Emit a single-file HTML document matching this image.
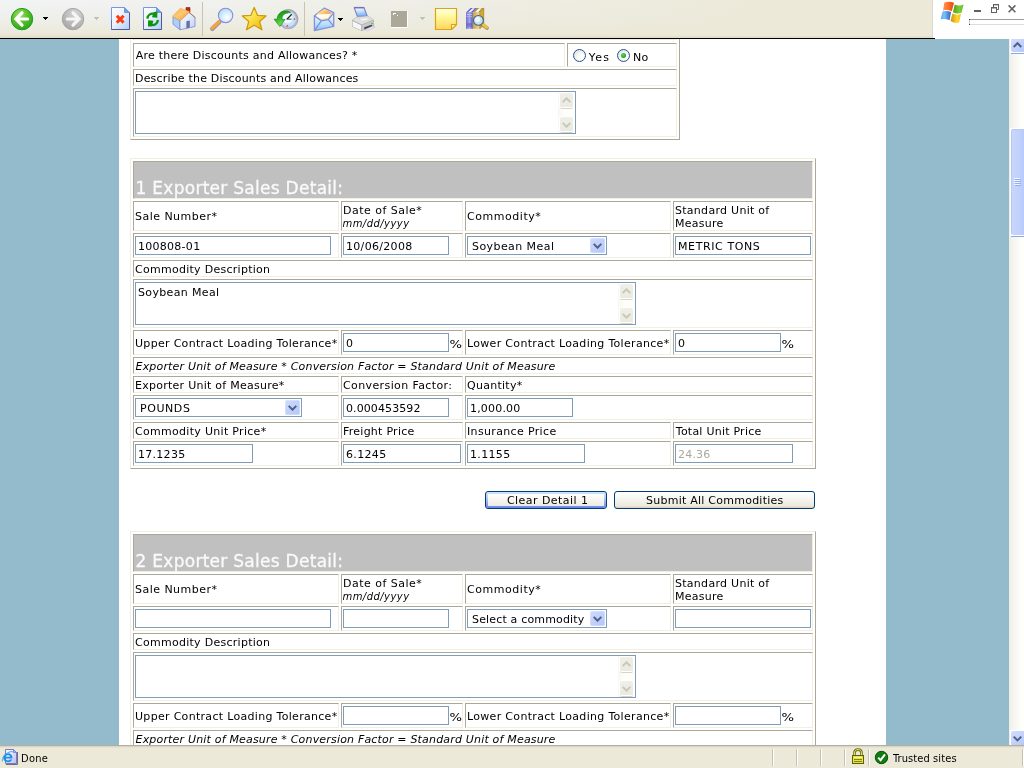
<!DOCTYPE html>
<html><head><meta charset="utf-8"><title>Exporter Sales Detail</title>
<style>
html,body{margin:0;padding:0;}
body{width:1024px;height:768px;overflow:hidden;position:relative;background:#94bbcc;font-family:"DejaVu Sans","Liberation Sans",sans-serif;font-size:11px;color:#000;}
#page{position:absolute;left:119px;top:39px;width:767px;height:706px;background:#fff;}
#view{position:absolute;left:0;top:39px;width:1009px;height:706px;overflow:hidden;}
#view .in0{position:absolute;left:0;top:-39px;width:1009px;height:768px;will-change:transform;}
.t{position:absolute;white-space:nowrap;line-height:13px;height:13px;margin-top:1px;}
.c{position:absolute;border:1px solid;border-color:#aca899 #f1efe2 #f1efe2 #aca899;}
.tb{position:absolute;border:1px solid;border-color:#f1efe2 #aca899 #aca899 #f1efe2;}
.in{position:absolute;border:1px solid #7f9db9;background:#fff;}
.sb{position:absolute;width:15px;height:15px;border-radius:2px;background:linear-gradient(135deg,#d0dbfd 0%,#c1d0fb 50%,#b3c6f8 100%);box-shadow:inset 0 0 0 1px rgba(255,255,255,.25);}
.sb .chv{position:absolute;left:3px;top:5px;}
.tsb{position:absolute;width:17px;background:linear-gradient(90deg,#f8f7f2,#fefefb 40%);}
.tbtn{position:absolute;left:2px;width:13px;height:14px;border-radius:2px;background:linear-gradient(180deg,#f0efe8,#ebeadf);box-shadow:0 0 0 1px #fff, 0 2px 0 0 #d6d4c6;}
.tbtn .chv{position:absolute;left:2px;top:4px;}
.rd{position:absolute;width:11px;height:11px;border:1px solid #21528c;border-radius:50%;background:radial-gradient(circle at 70% 70%,#fff 20%,#dcdcd4 100%);}
.rd i{position:absolute;left:3px;top:3px;width:5px;height:5px;border-radius:50%;background:radial-gradient(circle at 40% 35%,#5fd35f,#21a121 70%);}
.btn{position:absolute;border:1px solid #003c74;border-radius:3px;background:linear-gradient(180deg,#fff 0%,#f4f3ee 50%,#ece9dd 85%,#d6d0c5 100%);}
.btn.def{padding:2px;background:linear-gradient(180deg,#fff 0%,#f6f5f0 50%,#ecebe3 100%) content-box,linear-gradient(180deg,#cee7ff 0%,#b6cef8 35%,#8aa2f0 75%,#6982ee 100%) padding-box;}
#toolbar{position:absolute;left:0;top:0;width:933px;height:38px;background:linear-gradient(180deg,#eff0ee 0%,#eeeee9 40%,#ece9d8 100%);}
#tbline{position:absolute;left:0;top:38px;width:935px;height:1px;background:#000;}
#topright{position:absolute;left:933px;top:0;width:91px;height:39px;background:#fff;}
#status{position:absolute;left:0;top:745px;width:1024px;height:23px;background:#ece9d8;}
#status:before{content:"";position:absolute;left:0;top:0;width:1024px;height:1px;background:#b2af9e;box-shadow:0 1px 0 #d8d5c4,0 2px 0 #e6e3d2;}
#sttext{position:absolute;left:0;top:745px;width:1024px;height:23px;will-change:transform;font-family:"DejaVu Sans Condensed","Liberation Sans",sans-serif;}
#vsb{position:absolute;left:1009px;top:39px;width:15px;height:706px;background:linear-gradient(90deg,#f0efe8 0,#f6f5f0 3px,#fefefb 12px);}
.sep{position:absolute;top:749px;width:1px;height:17px;background:#c5c2b2;border-right:1px solid #fff;}
</style></head>
<body>
<div id="page"></div>
<div id="view"><div class="in0">
<div class="tb" style="left:130px;top:20px;width:548px;height:118px;"></div>
<div class="c" style="left:133px;top:22px;width:542px;height:16px;"></div>
<div class="c" style="left:133px;top:43px;width:430px;height:22px;"></div>
<div class="c" style="left:567px;top:43px;width:108px;height:22px;"></div>
<div class="c" style="left:133px;top:69px;width:542px;height:15px;"></div>
<div class="c" style="left:133px;top:88px;width:542px;height:47px;"></div>
<span class="t " style="left:135.80px;top:48px;letter-spacing:0.239px;">Are there Discounts and Allowances? *</span>
<span class="t " style="left:135.00px;top:71px;letter-spacing:0.183px;">Describe the Discounts and Allowances</span>
<div class="rd" style="left:573px;top:49px;"></div>
<span class="t " style="left:588.80px;top:50px;letter-spacing:1.248px;">Yes</span>
<div class="rd" style="left:617px;top:49px;"><i></i></div>
<span class="t " style="left:633.00px;top:50px;letter-spacing:0.271px;">No</span>
<div class="in" style="left:135px;top:91px;width:439px;height:41px;"></div>
<div class="tsb" style="left:558px;top:92px;height:41px;"><div class="tbtn" style="top:1px;"><svg class="chv" width="9" height="6" viewBox="0 0 9 6"><path d="M0.7 5.1 L4.5 1.3 L8.3 5.1" fill="none" stroke="#c9c7ba" stroke-width="2"/></svg></div><div class="tbtn" style="bottom:2px;"><svg class="chv" style="top:5px" width="9" height="6" viewBox="0 0 9 6"><path d="M0.7 0.9 L4.5 4.7 L8.3 0.9" fill="none" stroke="#c9c7ba" stroke-width="2"/></svg></div></div>
<div class="tb" style="left:130px;top:158px;width:684px;height:309px;"></div>
<div class="c" style="left:133px;top:161px;width:678px;height:36px;background:#c0c0c0;"></div>
<span class="t h" style="left:135.50px;top:181px;letter-spacing:0.277px;font-size:17px;color:#fafafa;-webkit-text-stroke:0.3px #fafafa;">1 Exporter Sales Detail:</span>
<div class="c" style="left:133px;top:201px;width:204px;height:28px;"></div>
<div class="c" style="left:341px;top:201px;width:120px;height:28px;"></div>
<div class="c" style="left:465px;top:201px;width:204px;height:28px;"></div>
<div class="c" style="left:673px;top:201px;width:138px;height:28px;"></div>
<span class="t " style="left:135.00px;top:209px;letter-spacing:0.470px;">Sale Number*</span>
<span class="t " style="left:343.00px;top:203px;letter-spacing:0.495px;">Date of Sale*</span>
<span class="t " style="left:342.50px;top:216px;letter-spacing:0.441px;font-size:10px;font-style:italic;">mm/dd/yyyy</span>
<span class="t " style="left:467.00px;top:209px;letter-spacing:0.546px;">Commodity*</span>
<span class="t " style="left:675.00px;top:203px;letter-spacing:0.279px;">Standard Unit of</span>
<span class="t " style="left:675.00px;top:216px;letter-spacing:0.250px;">Measure</span>
<div class="c" style="left:133px;top:233px;width:204px;height:23px;"></div>
<div class="c" style="left:341px;top:233px;width:120px;height:23px;"></div>
<div class="c" style="left:465px;top:233px;width:204px;height:23px;"></div>
<div class="c" style="left:673px;top:233px;width:138px;height:23px;"></div>
<div class="in" style="left:135px;top:236px;width:194px;height:17px;"></div>
<div class="in" style="left:343px;top:236px;width:104px;height:17px;"></div>
<div class="in" style="left:467px;top:236px;width:138px;height:17px;"></div>
<div class="sb" style="left:590px;top:238px;"><svg class="chv" width="9" height="6" viewBox="0 0 9 6"><path d="M0.7 0.9 L4.5 4.7 L8.3 0.9" fill="none" stroke="#4d6185" stroke-width="2"/></svg></div>
<div class="in" style="left:675px;top:236px;width:134px;height:17px;"></div>
<span class="t " style="left:138.00px;top:239px;letter-spacing:0.271px;">100808-01</span>
<span class="t " style="left:346.00px;top:239px;letter-spacing:0.310px;">10/06/2008</span>
<span class="t " style="left:472.00px;top:239px;letter-spacing:0.428px;">Soybean Meal</span>
<span class="t " style="left:678.00px;top:239px;letter-spacing:0.597px;">METRIC TONS</span>
<div class="c" style="left:133px;top:260px;width:678px;height:15px;"></div>
<span class="t " style="left:135.00px;top:262px;letter-spacing:0.274px;">Commodity Description</span>
<div class="c" style="left:133px;top:279px;width:678px;height:47px;"></div>
<div class="in" style="left:135px;top:282px;width:499px;height:41px;"></div>
<div class="tsb" style="left:618px;top:283px;height:41px;"><div class="tbtn" style="top:1px;"><svg class="chv" width="9" height="6" viewBox="0 0 9 6"><path d="M0.7 5.1 L4.5 1.3 L8.3 5.1" fill="none" stroke="#c9c7ba" stroke-width="2"/></svg></div><div class="tbtn" style="bottom:2px;"><svg class="chv" style="top:5px" width="9" height="6" viewBox="0 0 9 6"><path d="M0.7 0.9 L4.5 4.7 L8.3 0.9" fill="none" stroke="#c9c7ba" stroke-width="2"/></svg></div></div>
<span class="t " style="left:138.00px;top:285px;letter-spacing:0.345px;">Soybean Meal</span>
<div class="c" style="left:133px;top:330px;width:204px;height:23px;"></div>
<div class="c" style="left:341px;top:330px;width:120px;height:23px;"></div>
<div class="c" style="left:465px;top:330px;width:204px;height:23px;"></div>
<div class="c" style="left:673px;top:330px;width:138px;height:23px;"></div>
<span class="t " style="left:135.00px;top:336px;letter-spacing:0.304px;">Upper Contract Loading Tolerance*</span>
<div class="in" style="left:343px;top:333px;width:104px;height:17px;"></div>
<span class="t " style="left:449.80px;top:337px;letter-spacing:2.048px;transform:scaleX(1.2);transform-origin:2.5px 0;">%</span>
<span class="t " style="left:467.00px;top:336px;letter-spacing:0.315px;">Lower Contract Loading Tolerance*</span>
<div class="in" style="left:675px;top:333px;width:104px;height:17px;"></div>
<span class="t " style="left:781.80px;top:337px;letter-spacing:2.048px;transform:scaleX(1.2);transform-origin:2.5px 0;">%</span>
<span class="t " style="left:346.00px;top:336px;letter-spacing:0.501px;">0</span>
<span class="t " style="left:678.00px;top:336px;letter-spacing:0.501px;">0</span>
<div class="c" style="left:133px;top:357px;width:678px;height:15px;"></div>
<span class="t " style="left:135.50px;top:359px;letter-spacing:0.183px;font-style:italic;">Exporter Unit of Measure * Conversion Factor = Standard Unit of Measure</span>
<div class="c" style="left:133px;top:376px;width:204px;height:15px;"></div>
<div class="c" style="left:341px;top:376px;width:120px;height:15px;"></div>
<div class="c" style="left:465px;top:376px;width:346px;height:15px;"></div>
<span class="t " style="left:135.00px;top:378px;letter-spacing:0.259px;">Exporter Unit of Measure*</span>
<span class="t " style="left:343.00px;top:378px;letter-spacing:0.389px;">Conversion Factor:</span>
<span class="t " style="left:467.00px;top:378px;letter-spacing:0.274px;">Quantity*</span>
<div class="c" style="left:133px;top:395px;width:204px;height:23px;"></div>
<div class="c" style="left:341px;top:395px;width:120px;height:23px;"></div>
<div class="c" style="left:465px;top:395px;width:346px;height:23px;"></div>
<div class="in" style="left:135px;top:398px;width:165px;height:17px;"></div>
<div class="sb" style="left:285px;top:400px;"><svg class="chv" width="9" height="6" viewBox="0 0 9 6"><path d="M0.7 0.9 L4.5 4.7 L8.3 0.9" fill="none" stroke="#4d6185" stroke-width="2"/></svg></div>
<div class="in" style="left:343px;top:398px;width:104px;height:17px;"></div>
<div class="in" style="left:467px;top:398px;width:104px;height:17px;"></div>
<span class="t " style="left:140.00px;top:401px;letter-spacing:0.573px;">POUNDS</span>
<span class="t " style="left:346.00px;top:401px;letter-spacing:0.093px;">0.000453592</span>
<span class="t " style="left:470.00px;top:401px;letter-spacing:0.189px;">1,000.00</span>
<div class="c" style="left:133px;top:422px;width:204px;height:15px;"></div>
<div class="c" style="left:341px;top:422px;width:120px;height:15px;"></div>
<div class="c" style="left:465px;top:422px;width:204px;height:15px;"></div>
<div class="c" style="left:673px;top:422px;width:138px;height:15px;"></div>
<span class="t " style="left:135.00px;top:424px;letter-spacing:0.302px;">Commodity Unit Price*</span>
<span class="t " style="left:343.00px;top:424px;letter-spacing:0.252px;">Freight Price</span>
<span class="t " style="left:467.00px;top:424px;letter-spacing:0.347px;">Insurance Price</span>
<span class="t " style="left:675.80px;top:424px;letter-spacing:0.234px;">Total Unit Price</span>
<div class="c" style="left:133px;top:441px;width:204px;height:23px;"></div>
<div class="c" style="left:341px;top:441px;width:120px;height:23px;"></div>
<div class="c" style="left:465px;top:441px;width:204px;height:23px;"></div>
<div class="c" style="left:673px;top:441px;width:138px;height:23px;"></div>
<div class="in" style="left:135px;top:444px;width:116px;height:17px;"></div>
<div class="in" style="left:343px;top:444px;width:116px;height:17px;"></div>
<div class="in" style="left:467px;top:444px;width:116px;height:17px;"></div>
<div class="in" style="left:675px;top:444px;width:116px;height:17px;"></div>
<span class="t " style="left:138.00px;top:447px;letter-spacing:0.278px;">17.1235</span>
<span class="t " style="left:346.00px;top:447px;letter-spacing:0.328px;">6.1245</span>
<span class="t " style="left:470.00px;top:447px;letter-spacing:0.328px;">1.1155</span>
<span class="t " style="left:678.00px;top:447px;letter-spacing:0.202px;color:#aca899;">24.36</span>
<div class="btn def" style="left:485px;top:491px;width:116px;height:12px;"></div>
<span class="t " style="left:507.00px;top:493px;letter-spacing:0.443px;">Clear Detail 1</span>
<div class="btn" style="left:614px;top:491px;width:199px;height:16px;"></div>
<span class="t " style="left:646.00px;top:493px;letter-spacing:0.244px;">Submit All Commodities</span>
<div class="tb" style="left:130px;top:531px;width:684px;height:309px;"></div>
<div class="c" style="left:133px;top:534px;width:678px;height:36px;background:#c0c0c0;"></div>
<span class="t h" style="left:135.50px;top:554px;letter-spacing:0.277px;font-size:17px;color:#fafafa;-webkit-text-stroke:0.3px #fafafa;">2 Exporter Sales Detail:</span>
<div class="c" style="left:133px;top:574px;width:204px;height:28px;"></div>
<div class="c" style="left:341px;top:574px;width:120px;height:28px;"></div>
<div class="c" style="left:465px;top:574px;width:204px;height:28px;"></div>
<div class="c" style="left:673px;top:574px;width:138px;height:28px;"></div>
<span class="t " style="left:135.00px;top:582px;letter-spacing:0.470px;">Sale Number*</span>
<span class="t " style="left:343.00px;top:576px;letter-spacing:0.495px;">Date of Sale*</span>
<span class="t " style="left:342.50px;top:589px;letter-spacing:0.441px;font-size:10px;font-style:italic;">mm/dd/yyyy</span>
<span class="t " style="left:467.00px;top:582px;letter-spacing:0.546px;">Commodity*</span>
<span class="t " style="left:675.00px;top:576px;letter-spacing:0.279px;">Standard Unit of</span>
<span class="t " style="left:675.00px;top:589px;letter-spacing:0.250px;">Measure</span>
<div class="c" style="left:133px;top:606px;width:204px;height:23px;"></div>
<div class="c" style="left:341px;top:606px;width:120px;height:23px;"></div>
<div class="c" style="left:465px;top:606px;width:204px;height:23px;"></div>
<div class="c" style="left:673px;top:606px;width:138px;height:23px;"></div>
<div class="in" style="left:135px;top:609px;width:194px;height:17px;"></div>
<div class="in" style="left:343px;top:609px;width:104px;height:17px;"></div>
<div class="in" style="left:467px;top:609px;width:138px;height:17px;"></div>
<div class="sb" style="left:590px;top:611px;"><svg class="chv" width="9" height="6" viewBox="0 0 9 6"><path d="M0.7 0.9 L4.5 4.7 L8.3 0.9" fill="none" stroke="#4d6185" stroke-width="2"/></svg></div>
<div class="in" style="left:675px;top:609px;width:134px;height:17px;"></div>
<span class="t " style="left:472.00px;top:612px;letter-spacing:0.168px;">Select a commodity</span>
<div class="c" style="left:133px;top:633px;width:678px;height:15px;"></div>
<span class="t " style="left:135.00px;top:635px;letter-spacing:0.274px;">Commodity Description</span>
<div class="c" style="left:133px;top:652px;width:678px;height:47px;"></div>
<div class="in" style="left:135px;top:655px;width:499px;height:41px;"></div>
<div class="tsb" style="left:618px;top:656px;height:41px;"><div class="tbtn" style="top:1px;"><svg class="chv" width="9" height="6" viewBox="0 0 9 6"><path d="M0.7 5.1 L4.5 1.3 L8.3 5.1" fill="none" stroke="#c9c7ba" stroke-width="2"/></svg></div><div class="tbtn" style="bottom:2px;"><svg class="chv" style="top:5px" width="9" height="6" viewBox="0 0 9 6"><path d="M0.7 0.9 L4.5 4.7 L8.3 0.9" fill="none" stroke="#c9c7ba" stroke-width="2"/></svg></div></div>
<div class="c" style="left:133px;top:703px;width:204px;height:23px;"></div>
<div class="c" style="left:341px;top:703px;width:120px;height:23px;"></div>
<div class="c" style="left:465px;top:703px;width:204px;height:23px;"></div>
<div class="c" style="left:673px;top:703px;width:138px;height:23px;"></div>
<span class="t " style="left:135.00px;top:709px;letter-spacing:0.304px;">Upper Contract Loading Tolerance*</span>
<div class="in" style="left:343px;top:706px;width:104px;height:17px;"></div>
<span class="t " style="left:449.80px;top:710px;letter-spacing:2.048px;transform:scaleX(1.2);transform-origin:2.5px 0;">%</span>
<span class="t " style="left:467.00px;top:709px;letter-spacing:0.315px;">Lower Contract Loading Tolerance*</span>
<div class="in" style="left:675px;top:706px;width:104px;height:17px;"></div>
<span class="t " style="left:781.80px;top:710px;letter-spacing:2.048px;transform:scaleX(1.2);transform-origin:2.5px 0;">%</span>
<div class="c" style="left:133px;top:730px;width:678px;height:15px;"></div>
<span class="t " style="left:135.50px;top:732px;letter-spacing:0.183px;font-style:italic;">Exporter Unit of Measure * Conversion Factor = Standard Unit of Measure</span>
<div class="c" style="left:133px;top:749px;width:204px;height:15px;"></div>
<div class="c" style="left:341px;top:749px;width:120px;height:15px;"></div>
<div class="c" style="left:465px;top:749px;width:346px;height:15px;"></div>
<span class="t " style="left:135.00px;top:751px;letter-spacing:0.259px;">Exporter Unit of Measure*</span>
<span class="t " style="left:343.00px;top:751px;letter-spacing:0.389px;">Conversion Factor:</span>
<span class="t " style="left:467.00px;top:751px;letter-spacing:0.274px;">Quantity*</span>
<div class="c" style="left:133px;top:768px;width:204px;height:23px;"></div>
<div class="c" style="left:341px;top:768px;width:120px;height:23px;"></div>
<div class="c" style="left:465px;top:768px;width:346px;height:23px;"></div>
<div class="in" style="left:135px;top:771px;width:165px;height:17px;"></div>
<div class="sb" style="left:285px;top:773px;"><svg class="chv" width="9" height="6" viewBox="0 0 9 6"><path d="M0.7 0.9 L4.5 4.7 L8.3 0.9" fill="none" stroke="#4d6185" stroke-width="2"/></svg></div>
<div class="in" style="left:343px;top:771px;width:104px;height:17px;"></div>
<div class="in" style="left:467px;top:771px;width:104px;height:17px;"></div>
<div class="c" style="left:133px;top:795px;width:204px;height:15px;"></div>
<div class="c" style="left:341px;top:795px;width:120px;height:15px;"></div>
<div class="c" style="left:465px;top:795px;width:204px;height:15px;"></div>
<div class="c" style="left:673px;top:795px;width:138px;height:15px;"></div>
<span class="t " style="left:135.00px;top:797px;letter-spacing:0.302px;">Commodity Unit Price*</span>
<span class="t " style="left:343.00px;top:797px;letter-spacing:0.252px;">Freight Price</span>
<span class="t " style="left:467.00px;top:797px;letter-spacing:0.347px;">Insurance Price</span>
<span class="t " style="left:675.80px;top:797px;letter-spacing:0.234px;">Total Unit Price</span>
<div class="c" style="left:133px;top:814px;width:204px;height:23px;"></div>
<div class="c" style="left:341px;top:814px;width:120px;height:23px;"></div>
<div class="c" style="left:465px;top:814px;width:204px;height:23px;"></div>
<div class="c" style="left:673px;top:814px;width:138px;height:23px;"></div>
<div class="in" style="left:135px;top:817px;width:116px;height:17px;"></div>
<div class="in" style="left:343px;top:817px;width:116px;height:17px;"></div>
<div class="in" style="left:467px;top:817px;width:116px;height:17px;"></div>
<div class="in" style="left:675px;top:817px;width:116px;height:17px;"></div>
</div></div>
<svg id="tbsvg" width="1024" height="39" viewBox="0 0 1024 39" style="position:absolute;left:0;top:0;">
<defs>
<linearGradient id="tbh" x1="0" y1="0" x2="1" y2="0"><stop offset="0" stop-color="#ece9d8" stop-opacity="0"/><stop offset="0.35" stop-color="#ece9d8" stop-opacity="0.35"/><stop offset="0.8" stop-color="#ece9d8" stop-opacity="0.95"/><stop offset="1" stop-color="#ece9d8" stop-opacity="1"/></linearGradient><linearGradient id="tbg" x1="0" y1="0" x2="0" y2="1"><stop offset="0" stop-color="#f2f4f5"/><stop offset="0.3" stop-color="#f0f1f0"/><stop offset="0.6" stop-color="#eeeee8"/><stop offset="0.88" stop-color="#ece9d9"/><stop offset="1" stop-color="#e0dcc8"/></linearGradient>
<radialGradient id="gback" cx="0.4" cy="0.3" r="0.8"><stop offset="0" stop-color="#a2e06c"/><stop offset="0.4" stop-color="#62c230"/><stop offset="0.85" stop-color="#32a81e"/><stop offset="1" stop-color="#1c9a1c"/></radialGradient>
<radialGradient id="gfwd" cx="0.6" cy="0.25" r="0.9"><stop offset="0" stop-color="#d6d6d6"/><stop offset="0.6" stop-color="#b6b6b6"/><stop offset="1" stop-color="#9c9c9c"/></radialGradient>
<linearGradient id="gdoc" x1="0" y1="0" x2="1" y2="1"><stop offset="0" stop-color="#ffffff"/><stop offset="0.45" stop-color="#eaf2fd"/><stop offset="1" stop-color="#a9cdfb"/></linearGradient>
<linearGradient id="groof" x1="0" y1="0" x2="1" y2="1"><stop offset="0" stop-color="#fdb64a"/><stop offset="0.5" stop-color="#fbc875"/><stop offset="1" stop-color="#f08a1c"/></linearGradient>
<linearGradient id="gwall" x1="0" y1="0" x2="1" y2="1"><stop offset="0" stop-color="#ffffff"/><stop offset="1" stop-color="#b9d6f6"/></linearGradient>
<radialGradient id="glens" cx="0.6" cy="0.65" r="0.7"><stop offset="0" stop-color="#ffffff"/><stop offset="0.6" stop-color="#cfeafc"/><stop offset="1" stop-color="#a9d6f6"/></radialGradient>
<linearGradient id="gstar" x1="0" y1="0" x2="1" y2="1"><stop offset="0" stop-color="#fff9a8"/><stop offset="0.45" stop-color="#fde047"/><stop offset="1" stop-color="#e5ac08"/></linearGradient>
<linearGradient id="gmail" x1="0" y1="0" x2="0" y2="1"><stop offset="0" stop-color="#e6f8ff"/><stop offset="0.45" stop-color="#d2f4ff"/><stop offset="0.75" stop-color="#b0dcfc"/><stop offset="1" stop-color="#84bef4"/></linearGradient>
<linearGradient id="gflap" x1="0" y1="0" x2="1" y2="0.4"><stop offset="0" stop-color="#ffee80"/><stop offset="0.5" stop-color="#ffd070"/><stop offset="1" stop-color="#f6a060"/></linearGradient>
<linearGradient id="gpaper" x1="0" y1="0" x2="0" y2="1"><stop offset="0" stop-color="#e4efff"/><stop offset="1" stop-color="#8db9f4"/></linearGradient>
<linearGradient id="gprn" x1="0" y1="0" x2="0" y2="1"><stop offset="0" stop-color="#e6e6e6"/><stop offset="1" stop-color="#a8a8a8"/></linearGradient>
<linearGradient id="gnote" x1="0" y1="0" x2="0" y2="1"><stop offset="0" stop-color="#fffff0"/><stop offset="0.35" stop-color="#fffb9c"/><stop offset="1" stop-color="#ffd45e"/></linearGradient>
<linearGradient id="gbook" x1="0" y1="0" x2="1" y2="0"><stop offset="0" stop-color="#6f6fd0"/><stop offset="0.5" stop-color="#a3a3ee"/><stop offset="1" stop-color="#5c5cb8"/></linearGradient>
<linearGradient id="gbook2" x1="0" y1="0" x2="1" y2="0"><stop offset="0" stop-color="#c8a040"/><stop offset="0.5" stop-color="#ecd28a"/><stop offset="1" stop-color="#b88c2c"/></linearGradient>
</defs>
<rect x="0" y="0" width="933" height="38" fill="url(#tbg)"/><rect x="0" y="0" width="933" height="36" fill="url(#tbh)"/>
<rect x="932" y="0" width="1" height="38" fill="#dcd9c8"/>
<rect x="933" y="0" width="91" height="39" fill="#fff"/>
<rect x="0" y="38" width="935" height="1" fill="#000"/>
<!-- back -->
<circle cx="22" cy="19.1" r="10.7" fill="url(#gback)" stroke="#18a018" stroke-width="1"/>
<path d="M22 12.8 L16 19 L22 25.2 M17 19 H27.6" fill="none" stroke="#fff" stroke-width="3.2" stroke-linejoin="miter" stroke-linecap="round"/>
<path d="M43 17h5v1h-1v1h-1v1h-1v-1h-1v-1h-1z" fill="#000" shape-rendering="crispEdges"/>
<!-- forward -->
<circle cx="73" cy="19.1" r="10.7" fill="url(#gfwd)" stroke="#a6a6a6" stroke-width="1"/>
<path d="M73 12.8 L79 19 L73 25.2 M78 19 H67.4" fill="none" stroke="#f5f5f5" stroke-width="3.2" stroke-linecap="round"/>
<path d="M94 17h5v1h-1v1h-1v1h-1v-1h-1v-1h-1z" fill="#c3c0b2" shape-rendering="crispEdges"/>
<!-- stop -->
<g>
<path d="M111.5 7.5 H124.5 L129.5 12.5 V29.5 H111.5 Z" fill="url(#gdoc)" stroke="#7a96de" stroke-width="1"/>
<path d="M124.5 7.5 V12.5 H129.5 Z" fill="#58a8f4" stroke="#7a8cd4" stroke-width="0.9" stroke-linejoin="round"/>
<path d="M111.5 29.5 H129.5 V12.5" fill="none" stroke="#56569a" stroke-width="1"/>
<path d="M111.5 29.5 V20" fill="none" stroke="#6670b8" stroke-width="1"/>
<path d="M116.8 15.8 L123.6 22.6 M123.6 15.8 L116.8 22.6" stroke="#ff3a12" stroke-width="3" fill="none"/>
</g>
<!-- refresh -->
<g>
<path d="M143.5 7.5 H156.5 L161.5 12.5 V29.5 H143.5 Z" fill="url(#gdoc)" stroke="#7a96de" stroke-width="1"/>
<path d="M156.5 7.5 V12.5 H161.5 Z" fill="#58a8f4" stroke="#7a8cd4" stroke-width="0.9" stroke-linejoin="round"/>
<path d="M143.5 29.5 H161.5 V12.5" fill="none" stroke="#56569a" stroke-width="1"/>
<path d="M143.5 29.5 V20" fill="none" stroke="#6670b8" stroke-width="1"/>
<path d="M147.4 18.6 C147.8 14.6 151 12.8 154.6 14.2" fill="none" stroke="#0f930f" stroke-width="2.3"/>
<path d="M153.6 12 L157.4 11.6 L157.3 17.7 L152 17.2 Z" fill="#0f930f"/>
<path d="M158 20 C157.4 24 154.2 25.8 150.6 24.6" fill="none" stroke="#0f930f" stroke-width="2.3"/>
<path d="M151.8 26.4 L148 26.6 L148.1 20.2 L153.4 20.8 Z" fill="#0f930f"/>
</g>
<!-- home -->
<g>
<path d="M186 7.5 h4 v5 h-4 z" fill="#b52a10" stroke="#8c2410" stroke-width="0.6"/>
<path d="M173 16.5 L180 21 V29.8 L173 24.2 Z" fill="#a9d0f6" stroke="#7f86cc" stroke-width="0.8"/>
<path d="M180 21 L189 12.3 L195 17.5 V26.5 L180 29.8 Z" fill="url(#gwall)" stroke="#8a86c8" stroke-width="0.8"/>
<path d="M180.3 8.3 L189.3 11.4 L189 12.6 L180.2 20.8 L172.5 16.2 Z" fill="url(#groof)" stroke="#f0a040" stroke-width="0.5"/>
<path d="M189 12.3 L195.4 17.8" stroke="#c07048" stroke-width="1" fill="none"/>
<path d="M186.4 21.2 L189.8 20.4 V27.6 L186.4 28.4 Z" fill="#6c6aa8"/>
</g>
<rect x="202" y="2" width="1" height="34" fill="#c8c4b2"/>
<!-- search -->
<g>
<path d="M219.4 22 L212.2 28.8" stroke="#9a94a4" stroke-width="4.4" stroke-linecap="round"/>
<path d="M219.2 21.6 L212.2 28.2" stroke="#f6a23e" stroke-width="3.2" stroke-linecap="round"/>
<circle cx="225.6" cy="15.4" r="7.2" fill="url(#glens)" stroke="#8a8ed2" stroke-width="1.1"/>
</g>
<!-- star -->
<path d="M254.2 7.4 L257.6 15.4 L266 15.9 L259.6 21.4 L261.9 29.8 L254.2 25.2 L246.5 29.8 L248.8 21.4 L242.4 15.9 L250.8 15.4 Z" fill="url(#gstar)" stroke="#cf9a0c" stroke-width="1.3" stroke-linejoin="round"/>
<!-- history -->
<g>
<circle cx="288.3" cy="19.1" r="9.6" fill="#b4b4bc" stroke="#a0a0a8" stroke-width="1"/>
<path d="M282 26 A9 9 0 0 0 297.3 19.1 L296 19.1 A7.7 7.7 0 0 1 283 25 Z" fill="#b8b4e4"/>
<circle cx="288.3" cy="19.1" r="7.7" fill="#bfe5fa"/>
<circle cx="287.6" cy="18.4" r="5" fill="#ffffff" opacity="0.8"/>
<path d="M286.4 19.2 H291.6" stroke="#707078" stroke-width="1.3" fill="none"/>
<path d="M287.2 19 L291.7 14.3" stroke="#2c2c30" stroke-width="1.3" fill="none"/>
<rect x="293.8" y="18.3" width="1.4" height="1.7" fill="#ff4a20"/><rect x="286.6" y="25" width="1.5" height="1.7" fill="#ff4a20"/><rect x="286.8" y="13" width="1.2" height="0.8" fill="#ffa060"/>
<linearGradient id="ghist" x1="0" y1="0" x2="0.4" y2="1"><stop offset="0" stop-color="#0c8a0c"/><stop offset="0.5" stop-color="#36b026"/><stop offset="1" stop-color="#7cec5c"/></linearGradient>
<path d="M290.4 12.4 C287.5 10.6 283.5 10.4 280.6 12.4 C278.4 14 277.2 16.4 277.2 19.2 L274.1 19.2 L279.8 26.5 L285 19.5 L281.8 19.3 C281.8 17.4 282.4 15.8 283.6 14.6 C285.4 13 288 12.4 290.4 12.4 Z" fill="url(#ghist)" stroke="#118a11" stroke-width="0.7" stroke-linejoin="round"/>
</g>
<rect x="304" y="2" width="1" height="34" fill="#c8c4b2"/>
<!-- mail -->
<g>
<path d="M314.4 15.8 L324.4 8.1 L333.7 12.6 V26.4 L314.4 30.7 Z" fill="url(#gmail)" stroke="#8a90d8" stroke-width="1.3" stroke-linejoin="round"/>
<path d="M317.2 13.6 L324.4 9 L331.6 12.8 L331 15 L317.2 15 Z" fill="url(#gflap)"/>
<path d="M317 14.4 L331 13.8 L328.3 18.6 L321.5 19.8 L317 17.4 Z" fill="#fffdf2"/>
<path d="M318.5 17.8 L321.6 19.6 L328.2 18.4 L330.4 15" fill="none" stroke="#f8c060" stroke-width="0.7"/>
<path d="M314.4 15.8 L321.3 20.8 L328.3 19.6 L333.7 12.8 M321.3 20.8 L314.6 30.4 M328.3 19.6 L333.5 26.2" fill="none" stroke="#868cd8" stroke-width="1.2"/>
</g>
<path d="M338 18h5v1h-1v1h-1v1h-1v-1h-1v-1h-1z" fill="#000" shape-rendering="crispEdges"/>
<!-- print -->
<g>
<linearGradient id="gpap2" x1="0" y1="0" x2="0.2" y2="1"><stop offset="0" stop-color="#ffffff"/><stop offset="0.4" stop-color="#d4e6fc"/><stop offset="1" stop-color="#7cb4f6"/></linearGradient>
<path d="M354.2 7.8 H364 L367.2 16 L357.4 16.2 Z" fill="url(#gpap2)" stroke="#7c80c8" stroke-width="1.1" stroke-linejoin="round"/>
<path d="M354 7.6 H364.2" stroke="#7074c0" stroke-width="1.4"/>
<path d="M352.5 20 L356.6 17.3 L368 16.2 L373.4 19.8 L373.6 26.6 L361.8 30.6 L352.5 26.6 Z" fill="#c9c9c9" stroke="#a2a2a2" stroke-width="0.6" stroke-linejoin="round"/>
<path d="M352.6 20 L356.6 17.4 L368 16.3 L373.3 19.8 L361.6 24.6 Z" fill="#e2e2e2"/>
<path d="M358.6 18.6 L366.8 17.4 L370.4 19.4 L362 21.4 Z" fill="#f2f2f2" stroke="#c4c4c4" stroke-width="0.5"/>
<path d="M352.7 21 L361.4 25.4 V30.3 L352.7 26.4 Z" fill="#f6f6f6"/>
<path d="M352.6 20.4 L361.6 24.9 L373.3 20.2" fill="none" stroke="#b0b0b0" stroke-width="0.8"/>
<path d="M361.6 25 V30.4" stroke="#acacac" stroke-width="0.8"/>
<path d="M364 27.6 L371.6 24.8 L372.4 26 L364.6 29.2 Z" fill="#3c3c3c"/>
<path d="M365.4 29.6 L373.4 26 L375 27 L367.4 30.8 Z" fill="#ececf4" stroke="#9c9cd0" stroke-width="0.4"/>
<rect x="371" y="23" width="1.9" height="1" fill="#58c840"/>
</g>
<!-- edit (disabled) -->
<rect x="391" y="11" width="16" height="16" fill="#aca899"/>
<rect x="407" y="11" width="1" height="17" fill="#fff"/><rect x="391" y="27" width="17" height="1" fill="#fff"/>
<rect x="393" y="13" width="3" height="1" fill="#fff"/><rect x="393" y="14" width="1" height="1" fill="#fff"/><rect x="397" y="15" width="1" height="1" fill="#fff"/>
<path d="M420 17h5v1h-1v1h-1v1h-1v-1h-1v-1h-1z" fill="#c3c0b2" shape-rendering="crispEdges"/>
<!-- note -->
<g>
<path d="M435.5 8.5 H456.5 V24.5 L451.5 29.5 H435.5 Z" fill="url(#gnote)" stroke="#d9a514" stroke-width="1.2"/>
<path d="M456.5 24.5 H451.5 V29.5 Z" fill="#fff6b8" stroke="#d9a514" stroke-width="1.1" stroke-linejoin="round"/>
</g>
<!-- research -->
<g>
<path d="M466 12.4 L470.5 7.9 H477.2 L472.9 12.4 Z" fill="#6464cc"/>
<path d="M468.2 12.2 L472.4 8.2 H475 L470.8 12.2 Z" fill="#eef0ff"/>
<path d="M472.9 12.4 L477.4 7.9 H483.8 L479.9 12.4 Z" fill="#b89030"/>
<path d="M475 12.2 L479 8.2 H481.8 L478 12.2 Z" fill="#fbfbf6"/>
<rect x="466" y="12.4" width="6.9" height="16.4" fill="url(#gbook)"/>
<rect x="466.6" y="14" width="5.6" height="0.9" fill="#c0c0fa"/><rect x="466.6" y="16" width="5.6" height="0.8" fill="#b4b4f6"/><rect x="466.6" y="23.6" width="5.6" height="0.9" fill="#5050a8"/><rect x="466.6" y="25.6" width="5.6" height="0.8" fill="#5a5ab0"/>
<path d="M472.9 12.4 H479.9 L483.8 7.9 V24.7 L479.9 28.8 H472.9 Z" fill="url(#gbook2)"/>
<path d="M479.9 12.4 L483.8 7.9 V24.7 L479.9 28.8 Z" fill="#d4aa38" stroke="#a07c28" stroke-width="0.5"/>
<path d="M482.6 24.8 L487 28" stroke="#5c4a18" stroke-width="3.6" stroke-linecap="round" opacity="0.55"/>
<path d="M482.3 24.2 L486.8 27.3" stroke="#f2c232" stroke-width="2.8" stroke-linecap="round"/>
<circle cx="478.4" cy="20.4" r="4.9" fill="#c6e2f0" stroke="#44608c" stroke-width="1.1"/>
<circle cx="477.6" cy="19.6" r="2.6" fill="#f2faff" opacity="0.85"/>
</g>
<!-- windows flag -->
<g>
<linearGradient id="gf1" x1="0" y1="0" x2="1" y2="0"><stop offset="0" stop-color="#ff9a4c"/><stop offset="0.55" stop-color="#fb6a28"/><stop offset="1" stop-color="#ea4206"/></linearGradient>
<linearGradient id="gf2" x1="0" y1="0" x2="1" y2="0"><stop offset="0" stop-color="#4ea020"/><stop offset="0.6" stop-color="#7ccc34"/><stop offset="1" stop-color="#68c020"/></linearGradient>
<linearGradient id="gf3" x1="0" y1="0" x2="1" y2="0"><stop offset="0" stop-color="#5aaaf8"/><stop offset="0.35" stop-color="#7cc0ff"/><stop offset="1" stop-color="#2c62b4"/></linearGradient>
<linearGradient id="gf4" x1="0" y1="0" x2="1" y2="0"><stop offset="0" stop-color="#d08c10"/><stop offset="0.6" stop-color="#ffd428"/><stop offset="1" stop-color="#f4c418"/></linearGradient>
<path d="M944.4 2.6 C947.4 1.6 950.8 1.6 954 2.7 L951.8 11.2 C948.8 10 945.8 9.8 943 10.4 Z" fill="url(#gf1)"/>
<path d="M954.6 4.4 C957.6 6 960.8 5.8 963.6 4.5 L961.4 12.8 C958.6 13.8 955.6 13.6 953 12.2 Z" fill="url(#gf2)"/>
<path d="M942.6 11.6 C945.6 10.8 948.4 11 951 12.1 L949.6 20.3 C946.6 19 943.6 18.6 940.6 19.4 Z" fill="url(#gf3)"/>
<path d="M952.3 13.6 C955.2 15 958.2 15 961 14.1 L959 22.6 C956.2 23.2 953.2 22.8 950.6 21 Z" fill="url(#gf4)"/>
</g>
<rect x="974" y="10" width="7" height="2" fill="#606060"/>
<path d="M993.5 7.5 V4.8 H998.5 V9.5 H996.5" fill="none" stroke="#606060" stroke-width="1"/><rect x="993" y="4" width="6" height="1" fill="#606060"/>
<rect x="991.5" y="8" width="5" height="4.5" fill="#fff" stroke="#606060" stroke-width="1"/><rect x="991" y="7" width="6" height="1" fill="#606060"/>
<path d="M1008.6 5.4 L1015.4 12.2 M1015.4 5.4 L1008.6 12.2" stroke="#606060" stroke-width="1.5" fill="none"/>
<rect x="969" y="19" width="55" height="1" fill="#9c9c9c"/><rect x="969" y="24" width="55" height="1" fill="#dcdcdc"/><rect x="969" y="19" width="1" height="6" fill="#c8c8c8"/><rect x="969" y="19" width="1" height="1" fill="#404040"/><rect x="969" y="24" width="1" height="1" fill="#404040"/>
</svg>

<div id="status"></div>
<div id="sttext"><span class="t" style="left:21px;top:6px;letter-spacing:0.3px;">Done</span><span class="t" style="left:893px;top:6px;letter-spacing:0.1px;">Trusted sites</span></div>
<svg id="sbsvg" width="15" height="706" viewBox="1009 39 15 706" style="position:absolute;left:1009px;top:39px;">
<defs>
<linearGradient id="gtrk" x1="0" y1="0" x2="1" y2="0"><stop offset="0" stop-color="#efede6"/><stop offset="0.25" stop-color="#f5f4ee"/><stop offset="0.8" stop-color="#fefefb"/><stop offset="1" stop-color="#fefefb"/></linearGradient>
<linearGradient id="gsbb" x1="0" y1="0" x2="1" y2="1"><stop offset="0" stop-color="#d3defd"/><stop offset="0.5" stop-color="#c3d2fb"/><stop offset="1" stop-color="#b2c6f6"/></linearGradient>
<linearGradient id="gthm" x1="0" y1="0" x2="1" y2="0"><stop offset="0" stop-color="#c9d6fb"/><stop offset="0.6" stop-color="#c1d0fb"/><stop offset="1" stop-color="#b4c7f7"/></linearGradient>
</defs>
<rect x="1009" y="39" width="15" height="706" fill="url(#gtrk)"/>
<!-- up -->
<rect x="1010" y="39" width="14" height="14" fill="#fff"/>
<rect x="1011" y="53" width="13" height="1" fill="#8aa9e2"/>
<path d="M1011 39 H1026 V52 H1013 Q1011 52 1011 50 Z" fill="url(#gsbb)"/>
<path d="M1013.7 47 L1017.5 43.2 L1021.3 47" fill="none" stroke="#4d6185" stroke-width="2"/>
<!-- thumb -->
<rect x="1010" y="128" width="14" height="108" fill="#fff"/>
<rect x="1011" y="236" width="13" height="1" fill="#8aa9e2"/>
<path d="M1011 131 Q1011 129 1013 129 H1026 V235 H1013 Q1011 235 1011 233 Z" fill="url(#gthm)"/>
<rect x="1012" y="129" width="12" height="1" fill="#b9c9f6"/><rect x="1011" y="130" width="1" height="104" fill="#b9c9f6"/>
<g shape-rendering="crispEdges"><rect x="1014" y="178" width="6" height="1" fill="#eef4fe"/><rect x="1015" y="179" width="6" height="1" fill="#8cb0f8"/><rect x="1014" y="180" width="6" height="1" fill="#eef4fe"/><rect x="1015" y="181" width="6" height="1" fill="#8cb0f8"/><rect x="1014" y="182" width="6" height="1" fill="#eef4fe"/><rect x="1015" y="183" width="6" height="1" fill="#8cb0f8"/><rect x="1014" y="184" width="6" height="1" fill="#eef4fe"/><rect x="1015" y="185" width="6" height="1" fill="#8cb0f8"/></g>
<!-- down -->
<rect x="1010" y="730" width="14" height="15" fill="#fff"/>
<path d="M1011 733 Q1011 731 1013 731 H1026 V745 H1011 Z" fill="url(#gsbb)"/>
<path d="M1013.7 736.6 L1017.5 740.4 L1021.3 736.6" fill="none" stroke="#4d6185" stroke-width="2"/>
</svg>
<svg id="stsvg" width="1024" height="23" viewBox="0 745 1024 23" style="position:absolute;left:0;top:745px;">
<defs>
<linearGradient id="gpg" x1="0" y1="0" x2="1" y2="1"><stop offset="0" stop-color="#ffffff"/><stop offset="1" stop-color="#b9bdf6"/></linearGradient>
</defs>
<!-- ie page icon -->
<path d="M6 764.5 H17.5 V752" fill="none" stroke="#6e6e88" stroke-width="1"/>
<path d="M5.5 749.5 H13.5 L16.5 752.5 V763.5 H5.5 Z" fill="url(#gpg)" stroke="#7878c4" stroke-width="1"/>
<path d="M13.5 749.5 V752.5 H16.5 Z" fill="#9cc4ff" stroke="#7878c4" stroke-width="0.8"/>
<path d="M12.4 757.6 C12.4 754.8 10.6 753.2 8 753.2 C5.2 753.2 3.2 755.2 3.2 757.8 C3.2 760.4 5.2 762.2 8 762.2 C10 762.2 11.6 761.2 12.2 759.6 L9.8 759.6 C9.4 760.2 8.8 760.4 8 760.4 C6.8 760.4 5.8 759.6 5.6 758.4 L12.4 758.4 Z M5.7 756.8 C6 755.7 6.9 755 8 755 C9.2 755 10 755.7 10.2 756.8 Z" fill="#1c8fe6"/>
<path d="M2.6 761.6 C1.4 759.2 3.4 755.4 7.4 753 C9.4 751.8 11.6 751.2 12.8 751.8" fill="none" stroke="#3aa8f0" stroke-width="1"/>
<!-- separators -->
<g shape-rendering="crispEdges">
<rect x="772" y="749" width="1" height="17" fill="#c5c2b2"/><rect x="773" y="749" width="1" height="17" fill="#fff"/>
<rect x="796" y="749" width="1" height="17" fill="#c5c2b2"/><rect x="797" y="749" width="1" height="17" fill="#fff"/>
<rect x="820" y="749" width="1" height="17" fill="#c5c2b2"/><rect x="821" y="749" width="1" height="17" fill="#fff"/>
<rect x="844" y="749" width="1" height="17" fill="#c5c2b2"/><rect x="845" y="749" width="1" height="17" fill="#fff"/>
<rect x="868" y="749" width="1" height="17" fill="#c5c2b2"/><rect x="869" y="749" width="1" height="17" fill="#fff"/>
<rect x="1022" y="749" width="1" height="17" fill="#c5c2b2"/><rect x="1023" y="749" width="1" height="17" fill="#fff"/>
</g>
<!-- lock -->
<path d="M854.5 756 V752.8 C854.5 750.6 856 749.6 858 749.6 C860 749.6 861.5 750.6 861.5 752.8 V756" fill="none" stroke="#6c6c1c" stroke-width="2.6"/>
<path d="M854.5 756 V752.8 C854.5 750.6 856 749.6 858 749.6 C860 749.6 861.5 750.6 861.5 752.8 V756" fill="none" stroke="#e8e85a" stroke-width="1"/>
<rect x="852.5" y="755.5" width="11" height="8" fill="#e4e43c" stroke="#5c5c14" stroke-width="1"/>
<rect x="854" y="757" width="8" height="1" fill="#fafa9c"/><rect x="854" y="759" width="8" height="1" fill="#84841c"/><rect x="854" y="761" width="8" height="1" fill="#84841c"/>
<!-- trusted check -->
<circle cx="881.5" cy="757.5" r="6.2" fill="#0f7c0f" stroke="#074e07" stroke-width="1"/>
<path d="M878.2 757.6 L880.6 760.2 L885 754.4" fill="none" stroke="#fff" stroke-width="2"/>
</svg>

</body></html>
